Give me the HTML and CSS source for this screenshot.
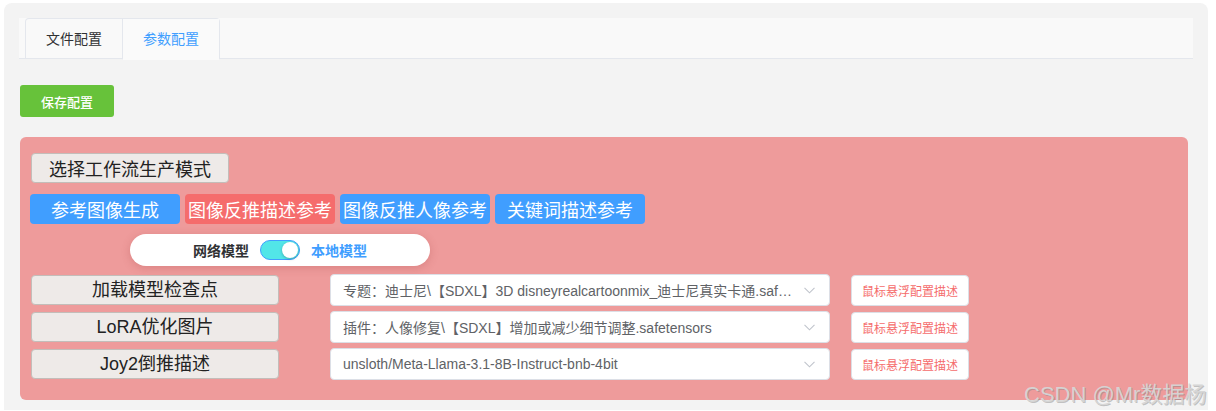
FILE: index.html
```html
<!DOCTYPE html>
<html lang="zh-CN">
<head>
<meta charset="utf-8">
<title>参数配置</title>
<link rel="stylesheet" href="styles.css">
</head>
<body>
<div class="app">
  <div class="tabs-header">
    <div class="tabs-nav">
      <div class="tab">文件配置</div>
      <div class="tab active">参数配置</div>
    </div>
  </div>
  <div class="content">
    <div class="toolbar">
      <button class="btn-save">保存配置</button>
    </div>
    <div class="panel">
      <div class="row-title">
        <button class="btn-gray">选择工作流生产模式</button>
      </div>
      <div class="mode-row">
        <button class="btn-mode blue">参考图像生成</button>
        <button class="btn-mode red">图像反推描述参考</button>
        <button class="btn-mode blue">图像反推人像参考</button>
        <button class="btn-mode blue">关键词描述参考</button>
      </div>
      <div class="pill">
        <span class="pill-left">网络模型</span>
        <span class="switch"><span class="knob"></span></span>
        <span class="pill-right">本地模型</span>
      </div>
      <div class="cfg-row">
        <div class="label">加载模型检查点</div>
        <div class="select"><span class="sel-text">专题：迪士尼\【SDXL】3D disneyrealcartoonmix_迪士尼真实卡通.saf…</span>
          <svg class="chev" width="11" height="7" viewBox="0 0 11 7"><path d="M0.5 0.8 L5.5 5.8 L10.5 0.8" fill="none" stroke="#c0c4cc" stroke-width="1.1"/></svg>
        </div>
        <button class="hint">鼠标悬浮配置描述</button>
      </div>
      <div class="cfg-row">
        <div class="label">LoRA优化图片</div>
        <div class="select"><span class="sel-text">插件：人像修复\【SDXL】增加或减少细节调整.safetensors</span>
          <svg class="chev" width="11" height="7" viewBox="0 0 11 7"><path d="M0.5 0.8 L5.5 5.8 L10.5 0.8" fill="none" stroke="#c0c4cc" stroke-width="1.1"/></svg>
        </div>
        <button class="hint">鼠标悬浮配置描述</button>
      </div>
      <div class="cfg-row">
        <div class="label">Joy2倒推描述</div>
        <div class="select"><span class="sel-text">unsloth/Meta-Llama-3.1-8B-Instruct-bnb-4bit</span>
          <svg class="chev" width="11" height="7" viewBox="0 0 11 7"><path d="M0.5 0.8 L5.5 5.8 L10.5 0.8" fill="none" stroke="#c0c4cc" stroke-width="1.1"/></svg>
        </div>
        <button class="hint">鼠标悬浮配置描述</button>
      </div>
    </div>
  </div>
</div>
<div class="watermark">CSDN @Mr数据杨</div>
</body>
</html>
```
FILE: styles.css
```css
* { box-sizing: border-box; }
html, body { margin: 0; padding: 0; background: #ffffff; }
body {
  font-family: "Liberation Sans", "Noto Sans CJK SC", sans-serif;
  width: 1216px;
  height: 411px;
  overflow: hidden;
  position: relative;
}
button { font-family: inherit; cursor: pointer; }

.app {
  margin: 3px 0 0 4px;
  width: 1204px;
  height: 407px;
  background: #f3f3f3;
  border-radius: 8px 8px 0 0;
  padding: 15px 15px 0 15px;
}

.tabs-header {
  height: 41px;
  background: #f9f9f9;
  border-bottom: 1px solid #e4e7ed;
  padding-left: 6px;
  display: flex;
}
.tabs-nav {
  display: flex;
  border: 1px solid #e4e7ed;
  border-bottom: none;
  border-radius: 4px 4px 0 0;
  height: 41px;
}
.tab {
  height: 41px;
  line-height: 40px;
  padding: 0 20px;
  font-size: 14px;
  color: #303133;
}
.tab + .tab { border-left: 1px solid #e4e7ed; }
.tab.active {
  color: #409eff;
  background: #fafafa;
  border-bottom: 1px solid #fafafa;
}

.content {
  margin: 0 5px 0 1px;
}
.toolbar {
  padding-top: 26px;
  display: flex;
}
.btn-save {
  height: 32px;
  width: 94px;
  padding: 0;
  border: none;
  border-radius: 3px;
  background: #67c23a;
  color: #ffffff;
  font-size: 13px;
  font-weight: 500;
}

.panel {
  margin-top: 20px;
  background: #ee9b9b;
  border-radius: 6px;
  padding: 16px 10px 20px 10px;
  display: flex;
  flex-direction: column;
}
.row-title { display: flex; padding-left: 1px; }
.btn-gray {
  height: 30px;
  width: 198px;
  padding: 0;
  background: #eeeae8;
  border: 1px solid #c3bdb9;
  border-radius: 4px;
  font-size: 18px;
  color: #222222;
}
.mode-row {
  display: flex;
  gap: 5px;
  margin-top: 11px;
}
.btn-mode {
  width: 150px;
  height: 30px;
  padding: 0;
  border: none;
  border-radius: 4px;
  font-size: 18px;
  color: #ffffff;
  white-space: nowrap;
}
.btn-mode.blue { background: #409eff; }
.btn-mode.red { background: #f56c6c; }

.pill {
  margin: 10px 0 0 100px;
  width: 300px;
  height: 32px;
  border-radius: 16px;
  background: #ffffff;
  box-shadow: 0 2px 8px rgba(160, 60, 60, 0.25);
  display: flex;
  align-items: center;
  justify-content: center;
  gap: 11px;
  font-size: 14px;
  font-weight: bold;
}
.pill-left { color: #303133; }
.pill-right { color: #409eff; }
.switch {
  width: 40px;
  height: 20px;
  border-radius: 10px;
  background: #52e6e8;
  border: 1px solid #409eff;
  display: flex;
  align-items: center;
  justify-content: flex-end;
  padding-right: 1px;
}
.knob {
  width: 16px;
  height: 16px;
  border-radius: 50%;
  background: #ffffff;
  box-shadow: 0 1px 3px rgba(0, 0, 0, 0.25);
}

.cfg-row {
  display: flex;
  align-items: center;
  height: 32px;
  margin-top: 5px;
}
.pill + .cfg-row { margin-top: 8px; }
.label {
  margin-left: 1px;
  width: 248px;
  height: 30px;
  line-height: 28px;
  text-align: center;
  background: #eeeae8;
  border: 1px solid #c3bdb9;
  border-radius: 4px;
  font-size: 18px;
  color: #222222;
}
.select {
  margin-left: 51px;
  width: 500px;
  height: 32px;
  background: #ffffff;
  border: 1px solid #dcdfe6;
  border-radius: 4px;
  display: flex;
  align-items: center;
  padding: 0 14px 0 12px;
  font-size: 14px;
  color: #606266;
}
.sel-text {
  flex: 1;
  white-space: nowrap;
  overflow: hidden;
}
.chev { flex: none; margin-left: 8px; }
.hint {
  margin-left: 21px;
  width: 118px;
  height: 31px;
  padding: 0;
  background: #ffffff;
  border: 1px solid #dcdfe6;
  border-radius: 4px;
  font-size: 12px;
  color: #f56c6c;
}

.watermark {
  position: absolute;
  left: 1024px;
  top: 376px;
  font-size: 22px;
  color: rgba(214, 214, 214, 0.95);
  text-shadow: 1px 1px 0 rgba(130, 130, 130, 0.45);
  white-space: nowrap;
  font-family: "Liberation Sans", "Noto Sans CJK SC", sans-serif;
}
```
